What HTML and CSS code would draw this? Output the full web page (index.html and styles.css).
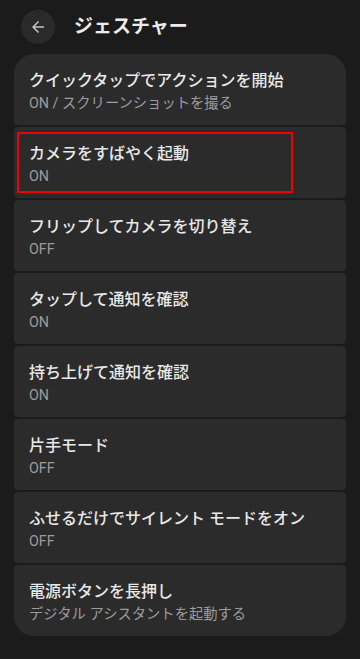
FILE: index.html
```html
<!doctype html>
<html lang="ja">
<head>
  <meta charset="UTF-8" />
  <meta name="viewport" content="width=device-width, initial-scale=1.0" />
  <title>ジェスチャー</title>
  <link rel="stylesheet" href="styles.css">
</head>
<body>
  <header class="top-bar">
    <button class="back-button" aria-label="戻る">
      <svg width="18" height="18" viewBox="0 0 24 24">
        <path d="M20 11H7.83l5.59-5.59L12 4l-8 8 8 8 1.41-1.41L7.83 13H20v-2z" fill="#c4c4c4"/>
      </svg>
    </button>
    <h1 class="page-title">ジェスチャー</h1>
  </header>

  <main class="settings-list">
    <div class="setting-item">
      <div class="setting-title">クイックタップでアクションを開始</div>
      <div class="setting-summary">ON / スクリーンショットを撮る</div>
    </div>
    <div class="setting-item">
      <div class="setting-title">カメラをすばやく起動</div>
      <div class="setting-summary">ON</div>
      <div class="highlight-box"></div>
    </div>
    <div class="setting-item">
      <div class="setting-title">フリップしてカメラを切り替え</div>
      <div class="setting-summary">OFF</div>
    </div>
    <div class="setting-item">
      <div class="setting-title">タップして通知を確認</div>
      <div class="setting-summary">ON</div>
    </div>
    <div class="setting-item">
      <div class="setting-title">持ち上げて通知を確認</div>
      <div class="setting-summary">ON</div>
    </div>
    <div class="setting-item">
      <div class="setting-title">片手モード</div>
      <div class="setting-summary">OFF</div>
    </div>
    <div class="setting-item">
      <div class="setting-title">ふせるだけでサイレント モードをオン</div>
      <div class="setting-summary">OFF</div>
    </div>
    <div class="setting-item">
      <div class="setting-title">電源ボタンを長押し</div>
      <div class="setting-summary">デジタル アシスタントを起動する</div>
    </div>
  </main>
</body>
</html>
```

FILE: styles.css
```css
* {
  margin: 0;
  padding: 0;
  box-sizing: border-box;
}

html, body {
  height: 100%;
  background-color: #1b1b1b;
  font-family: Roboto, "Noto Sans CJK JP", sans-serif;
  color: #e6e6e6;
}

.top-bar {
  height: 54px;
  display: flex;
  align-items: center;
  padding: 0 0 0 21px;
}

.back-button {
  width: 34px;
  height: 34px;
  border: none;
  border-radius: 50%;
  background-color: #2a2a2a;
  display: flex;
  justify-content: center;
  align-items: center;
  margin-right: 19px;
}

.page-title {
  font-size: 19px;
  font-weight: 700;
  color: #ececec;
  line-height: 24px;
}

.settings-list {
  margin: 0 14px;
  display: flex;
  flex-direction: column;
  gap: 2px;
}

.setting-item {
  position: relative;
  height: 71px;
  background-color: #2b2b2b;
  border-radius: 4px;
  padding: 16px 15px 0;
}

.setting-item:first-child {
  border-radius: 20px 20px 4px 4px;
}

.setting-item:last-child {
  border-radius: 4px 4px 20px 20px;
}

.setting-title {
  font-size: 16px;
  font-weight: 500;
  line-height: 22px;
  color: #e8e8e8;
  white-space: nowrap;
}

.setting-summary {
  font-size: 14.3px;
  line-height: 20px;
  margin-top: 1px;
  color: #9c9c9c;
  white-space: nowrap;
}

.highlight-box {
  position: absolute;
  left: 3px;
  top: 5px;
  width: 276px;
  height: 61px;
  border: 2px solid #f00000;
}
```
